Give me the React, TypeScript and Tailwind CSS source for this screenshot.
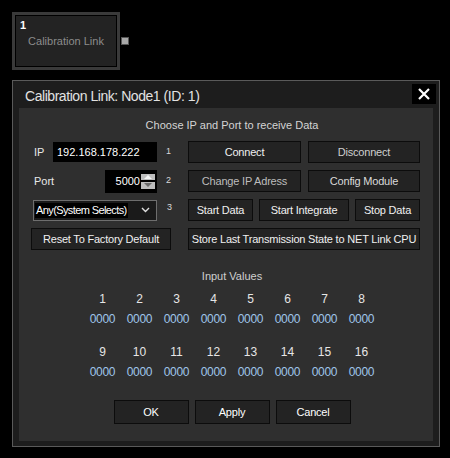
import * as React from "react";

const font = { fontFamily: '"Liberation Sans", Arial, sans-serif' };

type BtnProps = {
  label: string;
  className?: string;
  textClass?: string;
};

const Btn = ({ label, className = "", textClass = "text-[#f0f0f0]" }: BtnProps) => (
  <div
    className={`flex h-[22px] items-center justify-center border border-[#0c0c0c] bg-[#232323] text-[11px] tracking-[-0.2px] ${textClass} ${className}`}
  >
    {label}
  </div>
);

const Sup = ({ n }: { n: number }) => (
  <span className="absolute left-[135px] top-[6px] text-[9px] leading-none text-[#d8d8d8]">{n}</span>
);

const inputs = Array.from({ length: 16 }, (_, i) => i + 1);

export default function App() {
  return (
    <div className="h-[458px] w-[450px] overflow-hidden bg-black pt-3 pl-3" style={font}>
      {/* node block */}
      <div className="flex items-center">
        <div className="h-[58px] w-[108px] border-[3px] border-[#3a3a3a]">
          <div className="relative h-full w-full border border-black bg-[#232323]">
            <span className="absolute left-[4px] top-[4px] text-[11px] font-bold leading-none text-white">1</span>
            <div className="pt-[18px] text-center text-[11px] leading-[14px] text-[#8c8c8c]">Calibration Link</div>
          </div>
        </div>
        <div className="ml-[1px] h-[8px] w-[8px] border border-[#555] bg-[#a8a8a8]" />
      </div>

      {/* dialog */}
      <div className="mt-[10px] flex h-[367px] w-[428px] flex-col border border-[#5a5a5a] bg-[#1d1d1d]">
        <div className="flex h-[27px] items-start justify-between">
          <span className="pl-[12px] pt-[8px] text-[14px] leading-none tracking-[-0.45px] text-[#e2e2e2]">
            Calibration Link: Node1 (ID: 1)
          </span>
          <div className="mr-[3px] mt-[3px] flex h-[20px] w-[24px] items-center justify-center bg-black">
            <svg width="12" height="12" viewBox="0 0 12 12">
              <path d="M1 1 L11 11 M11 1 L1 11" stroke="#fff" strokeWidth="2.2" />
            </svg>
          </div>
        </div>

        <div className="mx-[6px] flex flex-1 flex-col bg-[#2f2f2f] pl-3 text-[#e8e8e8]">
          <div className="mt-[10px] text-center text-[11px] leading-[14px] text-[#d4d4d4]">
            Choose IP and Port to receive Data
          </div>

          {/* controls */}
          <div className="mt-[9px] flex flex-col gap-[7px]">
            <div className="flex">
              <div className="relative flex h-[22px] w-[157px] items-center">
                <span className="ml-[3px] w-[19px] text-[11px] text-[#e8e8e8]">IP</span>
                <div className="flex h-[20px] w-[104px] items-center bg-black pl-[4px] text-[11px] text-white">
                  192.168.178.222
                </div>
                <Sup n={1} />
              </div>
              <div className="flex w-[232px] gap-[7px]">
                <Btn label="Connect" className="w-[113px]" />
                <Btn label="Disconnect" className="w-[112px]" textClass="text-[#cfcfcf]" />
              </div>
            </div>

            <div className="flex">
              <div className="relative flex h-[22px] w-[157px] items-center">
                <span className="ml-[3px] w-[71px] text-[11px] text-[#e8e8e8]">Port</span>
                <div className="flex h-[23px] w-[52px] items-center justify-end bg-black pr-[2px]">
                  <span className="mr-[1px] text-[11px] text-white">5000</span>
                  <div className="flex flex-col gap-[2px]">
                    <div className="flex h-[6px] w-[14px] items-center justify-center bg-[#bdbdbd]">
                      <svg width="8" height="4" viewBox="0 0 8 4">
                        <path d="M0 4 L4 0 L8 4 Z" fill="#f4f4f4" />
                      </svg>
                    </div>
                    <div className="flex h-[7px] w-[14px] items-center justify-center bg-[#bdbdbd]">
                      <svg width="8" height="4" viewBox="0 0 8 4">
                        <path d="M0 0 L4 4 L8 0 Z" fill="#6a6a6a" />
                      </svg>
                    </div>
                  </div>
                </div>
                <Sup n={2} />
              </div>
              <div className="flex w-[232px] gap-[7px]">
                <Btn label="Change IP Adress" className="w-[113px]" textClass="text-[#bdbdbd]" />
                <Btn label="Config Module" className="w-[112px]" textClass="text-[#dadada]" />
              </div>
            </div>

            <div className="flex">
              <div className="relative flex h-[22px] w-[157px] items-center">
                <div className="ml-[2px] flex h-[21px] w-[124px] items-center border border-[#6e6e6e] bg-[#1a1a1a] pl-[1px]">
                  <span className="bg-black px-[1px] text-[11px] leading-[15px] tracking-[-0.6px] text-white">
                    Any(System Selects)
                  </span>
                  <svg className="ml-auto mr-[6px]" width="9" height="6" viewBox="0 0 9 6">
                    <path d="M1 1 L4.5 4.5 L8 1" stroke="#e0e0e0" strokeWidth="1.4" fill="none" />
                  </svg>
                </div>
                <span className="absolute left-[136px] top-[4px] text-[9px] leading-none text-[#d8d8d8]">3</span>
              </div>
              <div className="flex w-[232px] gap-[6px]">
                <Btn label="Start Data" className="w-[65px]" />
                <Btn label="Start Integrate" className="w-[90px]" />
                <Btn label="Stop Data" className="w-[65px]" />
              </div>
            </div>

            <div className="flex">
              <div className="w-[157px]">
                <Btn label="Reset To Factory Default" className="w-[140px]" />
              </div>
              <Btn label="Store Last Transmission State to NET Link CPU" className="w-[232px]" />
            </div>
          </div>

          {/* input values */}
          <div className="mt-[18px] text-center text-[11px] leading-[16px] text-[#cfcfcf]">Input Values</div>
          <div className="mx-auto mt-[7px] grid w-[296px] grid-cols-8 gap-y-[17px]">
            {inputs.map((n) => (
              <div key={n} className="flex flex-col items-center">
                <span className="text-[12px] leading-[16px] text-[#e6e6e6]">{n}</span>
                <span className="mt-[4px] text-[12px] leading-[16px] tracking-[-0.3px] text-[#9fc6ea]">0000</span>
              </div>
            ))}
          </div>

          <div className="mt-[20px] flex justify-center gap-[6px]">
            <Btn label="OK" className="w-[75px] h-[24px]" textClass="text-white" />
            <Btn label="Apply" className="w-[75px] h-[24px]" textClass="text-white" />
            <Btn label="Cancel" className="w-[75px] h-[24px]" textClass="text-white" />
          </div>
        </div>
        <div className="h-[5px]" />
      </div>
    </div>
  );
}
